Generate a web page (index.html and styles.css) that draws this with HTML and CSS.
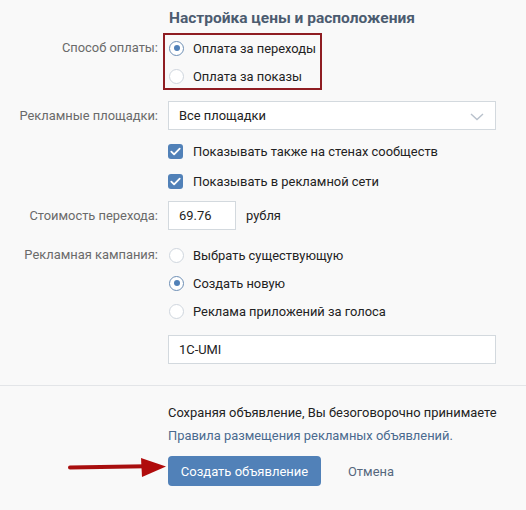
FILE: index.html
```html
<!DOCTYPE html>
<html lang="ru">
<head>
<meta charset="utf-8">
<link rel="stylesheet" href="styles.css">
</head>
<body>
<div class="page">
  <div class="form">
    <div class="row">
      <div class="label"></div>
      <div class="title">Настройка цены и расположения</div>
    </div>

    <div class="row pay">
      <div class="label lab-first">Способ оплаты:</div>
      <div class="ctrl group">
        <div class="opt"><span class="radio on"></span>Оплата за переходы</div>
        <div class="opt"><span class="radio"></span>Оплата за показы</div>
        <div class="hl"></div>
      </div>
    </div>

    <div class="row sites">
      <div class="label lab-input">Рекламные площадки:</div>
      <div class="ctrl">
        <div class="select">Все площадки
          <svg class="chev" width="14" height="8" viewBox="0 0 14 8"><path d="M1 1l6 5.5L13 1" fill="none" stroke="#b8c1cc" stroke-width="1.4"/></svg>
        </div>
      </div>
    </div>

    <div class="row checks">
      <div class="label"></div>
      <div class="ctrl">
        <div class="chk-row"><span class="check"><svg width="11" height="9" viewBox="0 0 11 9"><path d="M1.3 4.6l2.8 2.8L9.7 1.6" fill="none" stroke="#fff" stroke-width="1.8" stroke-linecap="round" stroke-linejoin="round"/></svg></span>Показывать также на стенах сообществ</div>
        <div class="chk-row"><span class="check"><svg width="11" height="9" viewBox="0 0 11 9"><path d="M1.3 4.6l2.8 2.8L9.7 1.6" fill="none" stroke="#fff" stroke-width="1.8" stroke-linecap="round" stroke-linejoin="round"/></svg></span>Показывать в рекламной сети</div>
      </div>
    </div>

    <div class="row cost">
      <div class="label lab-input">Стоимость перехода:</div>
      <div class="ctrl cost-ctrl">
        <div class="input small">69.76</div>
        <span class="unit">рубля</span>
      </div>
    </div>

    <div class="row camp">
      <div class="label lab-first">Рекламная кампания:</div>
      <div class="ctrl">
        <div class="opt"><span class="radio"></span>Выбрать существующую</div>
        <div class="opt"><span class="radio on"></span>Создать новую</div>
        <div class="opt"><span class="radio"></span>Реклама приложений за голоса</div>
      </div>
    </div>

    <div class="row name">
      <div class="label"></div>
      <div class="ctrl">
        <div class="input wide">1C-UMI</div>
      </div>
    </div>
  </div>

  <div class="divider"></div>

  <div class="footer">
    <div class="row">
      <div class="label"></div>
      <div class="ctrl">
        <div class="terms">Сохраняя объявление, Вы безоговорочно принимаете<br><span class="link">Правила размещения рекламных объявлений.</span></div>
        <div class="actions">
          <button class="btn">Создать объявление</button>
          <span class="cancel">Отмена</span>
          <svg class="arrow" width="104" height="22" viewBox="0 0 104 22"><path d="M4 10.5L80 9.2" stroke="#a80f0f" stroke-width="4" stroke-linecap="round"/><path d="M75 1L100 9.6L76 20Z" fill="#b00c0c"/></svg>
        </div>
      </div>
    </div>
  </div>
</div>
</body>
</html>
```

FILE: styles.css
```css
* { box-sizing: border-box; }
html, body { margin: 0; padding: 0; }
body {
  background: #f9f9f9;
  font-family: Roboto, "Open Sans", "Liberation Sans", sans-serif;
  font-size: 12.9px;
  color: #222;
  width: 526px;
  height: 510px;
  overflow: hidden;
}
.page { position: relative; }
.form { padding-top: 8px; }
.row {
  display: grid;
  grid-template-columns: 160px 328px;
  column-gap: 8px;
}
.label {
  text-align: right;
  color: #6a6a6a;
  padding-right: 2px;
  white-space: nowrap;
}
.lab-first { line-height: 28px; }
.lab-input { line-height: 29px; }
.title {
  font-size: 15.5px;
  font-weight: 700;
  color: #4c5c70;
  line-height: 20px;
  padding-left: 1px;
}
.ctrl { position: relative; }
.pay { margin-top: 6px; }
.opt {
  display: flex;
  align-items: center;
  height: 28px;
  color: #222;
}
.radio {
  width: 15px;
  height: 15px;
  border-radius: 50%;
  border: 1px solid #cfd6de;
  background: #fff;
  margin-right: 9px;
  margin-left: 1px;
  flex: none;
  position: relative;
}
.radio.on { border-color: #6e8fb5; }
.radio.on::after {
  content: "";
  position: absolute;
  left: 3.5px; top: 3.5px;
  width: 6px; height: 6px;
  border-radius: 50%;
  background: #5181b8;
}
.hl {
  position: absolute;
  left: -5px; top: -1px;
  width: 159px; height: 57px;
  border: 2px solid #8f1d22;
}
.sites { margin-top: 11px; }
.select {
  height: 29px;
  border: 1px solid #d3d9de;
  background: #fff;
  line-height: 27px;
  padding-left: 10px;
  position: relative;
  color: #222;
}
.chev { position: absolute; right: 11px; top: 11px; }
.checks { margin-top: 6px; }
.chk-row {
  display: flex;
  align-items: center;
  height: 30px;
}
.check {
  width: 15px;
  height: 15px;
  border-radius: 3px;
  background: #5181b8;
  margin-right: 10px;
  display: flex;
  align-items: center;
  justify-content: center;
  flex: none;
}
.cost { margin-top: 5px; }
.cost-ctrl { display: flex; align-items: center; }
.input {
  height: 29px;
  border: 1px solid #d3d9de;
  background: #fff;
  line-height: 27px;
  padding-left: 10px;
  color: #222;
}
.small { width: 68px; }
.unit { margin-left: 10px; }
.camp { margin-top: 11px; }
.name { margin-top: 10px; }
.wide { width: 328px; }
.divider {
  margin-top: 21px;
  height: 1px;
  background: #e3e5e8;
}
.footer { padding-top: 15px; }
.terms {
  line-height: 23px;
  color: #222;
  white-space: nowrap;
}
.link { color: #4a6a8f; }
.actions {
  margin-top: 9px;
  display: flex;
  align-items: center;
  position: relative;
}
.btn {
  width: 153px;
  height: 30px;
  border: none;
  border-radius: 4px;
  background: #5181b8;
  color: #fff;
  font-family: inherit;
  font-size: 13px;
  padding: 0;
}
.cancel {
  margin-left: 27px;
  color: #55677d;
}
.arrow {
  position: absolute;
  left: -102px;
  top: 1px;
}
```
